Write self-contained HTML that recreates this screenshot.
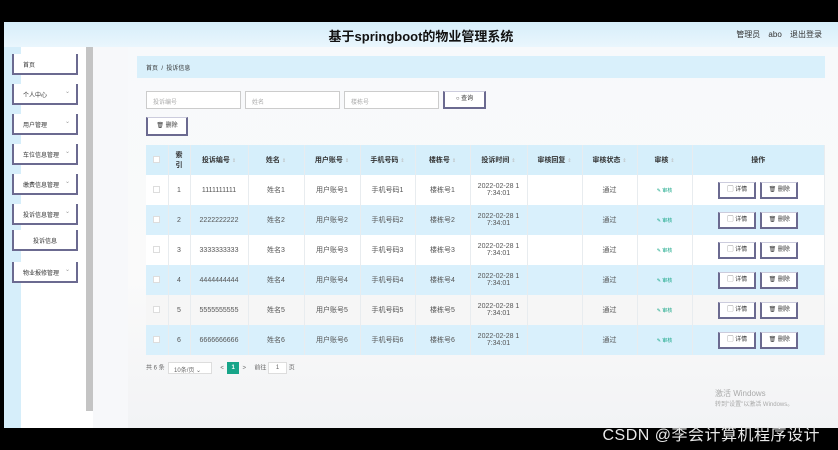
<!DOCTYPE html>
<html><head><meta charset="utf-8"><style>
*{box-sizing:border-box;margin:0;padding:0}
body{width:838px;height:450px;overflow:hidden;background:#000;font-family:"Liberation Sans","Noto Sans CJK SC",sans-serif;position:relative;color:#333}
.abs{position:absolute}
#top{left:0;top:0;width:838px;height:22px;background:#000}
#hdr{left:4px;top:22px;width:834px;height:25px;background:linear-gradient(#d6eefa,#eaf6fd);}
#hdr .t{position:absolute;left:0;width:100%;text-align:center;top:4px;font-size:13px;font-weight:bold;color:#111}
#hdr .r{position:absolute;right:16px;top:7px;font-size:8px;color:#333;word-spacing:6px}
#side{left:4px;top:47px;width:84px;height:381px;background:#fff}
#strip{left:4px;top:47px;width:17px;height:381px;background:#d6eefa}
#sb{left:86px;top:47px;width:7px;height:364px;background:#c4c4c4}
#sbw{left:86px;top:411px;width:7px;height:17px;background:#fff}
#main{left:93px;top:47px;width:745px;height:381px;background:#f7f8fa}
#content{left:128px;top:47px;width:710px;height:381px;background:linear-gradient(180deg,#f7f9fb,#fafafa 60%,#f2f3f5)}
.mb{position:absolute;left:12px;width:66px;height:21px;background:#fff;border:2px solid #6b6a90;border-top:none;font-size:6px;color:#333;padding:6px 0 0 9px;white-space:nowrap}
.mb i{position:absolute;right:6px;top:4px;font-style:normal;color:#999;font-size:6px}
#bc{left:137px;top:56px;width:688px;height:22px;background:#d9f0fb;font-size:6px;padding:7px 9px;color:#333}
.in{position:absolute;top:91px;height:18px;width:95px;background:#fff;border:1px solid #ccc;font-size:6px;color:#aaa;padding:5px 6px}
.btn{position:absolute;background:#fff;border:2px solid #6b6a90;border-top:1px solid #ccd;font-size:6px;color:#333;text-align:center}
table{position:absolute;left:146px;top:145px;width:679px;border-collapse:collapse;font-size:7px;color:#555}
td,th{border-right:1px solid #e8ecef;text-align:center;padding:0;vertical-align:middle}
th{height:30px;background:#d6effb;color:#333;font-weight:bold;font-size:7px}
td{height:30px}
th small{color:#bbb;font-size:5px;font-weight:normal}
tr.w td{background:#fff}tr.b td{background:#d9f0fc}tr.g td{background:#f6f6f6}
.cb{display:inline-block;width:7px;height:7px;border:1px solid #ddd;background:#fff}
.g1{color:#1aa88a;font-size:5px}
.ob{display:inline-block;width:38px;height:17px;border:2px solid #6b6a90;border-top:1px solid #ccd;background:#fff;font-size:6px;line-height:14px;margin:0 2px;vertical-align:middle;color:#333}
#pg{left:146px;top:362px;font-size:6px;color:#666}
#bot{left:0;top:428px;width:838px;height:22px;background:#000}
#csdn{right:18px;top:421px;font-size:16px;color:#e8e8e8;letter-spacing:0.5px}
#win{left:715px;top:388px;font-size:8px;color:#aaa}
</style></head><body>
<div class="abs" id="top"></div>
<div class="abs" id="hdr"><div class="t">基于springboot的物业管理系统</div><div class="r">管理员 abo 退出登录</div></div>
<div class="abs" id="side"></div>
<div class="abs" id="strip"></div>
<div class="abs" id="sb"></div>
<div class="abs" id="sbw"></div>
<div class="abs" id="main"></div>
<div class="abs" id="content"></div>
<div class="mb" style="top:54px">首页</div>
<div class="mb" style="top:84px">个人中心<i>⌄</i></div>
<div class="mb" style="top:114px">用户管理<i>⌄</i></div>
<div class="mb" style="top:144px">车位信息管理<i>⌄</i></div>
<div class="mb" style="top:174px">缴费信息管理<i>⌄</i></div>
<div class="mb" style="top:204px">投诉信息管理<i>⌄</i></div>
<div class="mb" style="top:230px;padding-left:0;text-align:center">投诉信息</div>
<div class="mb" style="top:262px">物业报修管理<i>⌄</i></div>
<div class="abs" id="bc">首页 &nbsp;/ &nbsp;投诉信息</div>
<div class="in" style="left:146px">投诉编号</div>
<div class="in" style="left:245px">姓名</div>
<div class="in" style="left:344px">楼栋号</div>
<div class="btn" style="left:443px;top:91px;width:43px;height:18px;line-height:15px">○ 查询</div>
<div class="btn" style="left:146px;top:117px;width:42px;height:19px;line-height:16px">🗑 删除</div>
<table>
<tr><th style="width:22px"><span class="cb"></span></th><th style="width:22px">索<br>引</th><th style="width:58px">投诉编号 <small>⇕</small></th><th style="width:56px">姓名 <small>⇕</small></th><th style="width:56px">用户账号 <small>⇕</small></th><th style="width:55px">手机号码 <small>⇕</small></th><th style="width:55px">楼栋号 <small>⇕</small></th><th style="width:57px">投诉时间 <small>⇕</small></th><th style="width:55px">审核回复 <small>⇕</small></th><th style="width:55px">审核状态 <small>⇕</small></th><th style="width:55px">审核 <small>⇕</small></th><th>操作</th></tr>
<tr class="w"><td><span class="cb"></span></td><td>1</td><td>1111111111</td><td>姓名1</td><td>用户账号1</td><td>手机号码1</td><td>楼栋号1</td><td>2022-02-28 1<br>7:34:01</td><td></td><td>通过</td><td class="g1">✎ 审核</td><td><span class="ob">▢ 详情</span><span class="ob">🗑 删除</span></td></tr>
<tr class="b"><td><span class="cb"></span></td><td>2</td><td>2222222222</td><td>姓名2</td><td>用户账号2</td><td>手机号码2</td><td>楼栋号2</td><td>2022-02-28 1<br>7:34:01</td><td></td><td>通过</td><td class="g1">✎ 审核</td><td><span class="ob">▢ 详情</span><span class="ob">🗑 删除</span></td></tr>
<tr class="w"><td><span class="cb"></span></td><td>3</td><td>3333333333</td><td>姓名3</td><td>用户账号3</td><td>手机号码3</td><td>楼栋号3</td><td>2022-02-28 1<br>7:34:01</td><td></td><td>通过</td><td class="g1">✎ 审核</td><td><span class="ob">▢ 详情</span><span class="ob">🗑 删除</span></td></tr>
<tr class="b"><td><span class="cb"></span></td><td>4</td><td>4444444444</td><td>姓名4</td><td>用户账号4</td><td>手机号码4</td><td>楼栋号4</td><td>2022-02-28 1<br>7:34:01</td><td></td><td>通过</td><td class="g1">✎ 审核</td><td><span class="ob">▢ 详情</span><span class="ob">🗑 删除</span></td></tr>
<tr class="g"><td><span class="cb"></span></td><td>5</td><td>5555555555</td><td>姓名5</td><td>用户账号5</td><td>手机号码5</td><td>楼栋号5</td><td>2022-02-28 1<br>7:34:01</td><td></td><td>通过</td><td class="g1">✎ 审核</td><td><span class="ob">▢ 详情</span><span class="ob">🗑 删除</span></td></tr>
<tr class="b"><td><span class="cb"></span></td><td>6</td><td>6666666666</td><td>姓名6</td><td>用户账号6</td><td>手机号码6</td><td>楼栋号6</td><td>2022-02-28 1<br>7:34:01</td><td></td><td>通过</td><td class="g1">✎ 审核</td><td><span class="ob">▢ 详情</span><span class="ob">🗑 删除</span></td></tr>
</table>
<div class="abs" id="pg">共 6 条 &nbsp;<span style="display:inline-block;width:44px;height:12px;border:1px solid #ddd;background:#fff;padding:2px 5px;vertical-align:middle">10条/页 ⌄</span> &nbsp; &nbsp; &lt; &nbsp;<span style="display:inline-block;width:12px;height:12px;background:#17a589;color:#fff;text-align:center;line-height:12px;font-weight:bold;vertical-align:middle">1</span>&nbsp; &gt; &nbsp; &nbsp; 前往 <span style="display:inline-block;width:19px;height:12px;border:1px solid #ddd;background:#fff;text-align:center;line-height:10px;vertical-align:middle">1</span> 页</div>
<div class="abs" id="win">激活 Windows<br><span style="font-size:6px">转到"设置"以激活 Windows。</span></div>
<div class="abs" id="bot"></div>
<div class="abs" id="csdn">CSDN @李会计算机程序设计</div>
</body></html>
